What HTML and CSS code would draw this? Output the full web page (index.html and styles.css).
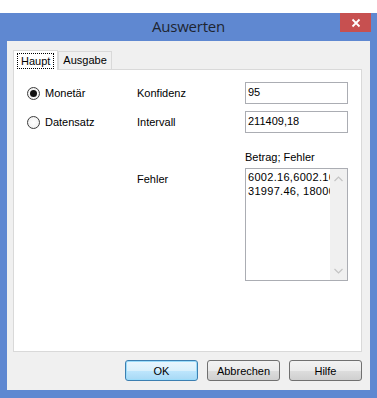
FILE: index.html
```html
<!DOCTYPE html>
<html lang="de">
<head>
    <meta charset="UTF-8">
    <meta name="viewport" content="width=device-width, initial-scale=1.0">
    <title>Auswerten</title>
    <link rel="stylesheet" href="styles.css">
</head>
<body>
    <div class="window">
        <div class="titlebar">
            <span></span>
            <span class="title">Auswerten</span>
            <a href="#" class="close">
                <svg width="10" height="10" viewBox="0 0 10 10">
                    <path d="M1.5 1.5 L8.5 8.5 M8.5 1.5 L1.5 8.5" stroke="#fff" stroke-width="1.8" fill="none"/>
                </svg>
            </a>
        </div>
        <div class="client">
            <ul class="tabs">
                <li class="tab active"><span class="focus">Haupt</span></li>
                <li class="tab">Ausgabe</li>
            </ul>
            <div class="panel">
                <div class="radios">
                    <label class="radio checked"><i></i>Monetär</label>
                    <label class="radio"><i></i>Datensatz</label>
                </div>
                <div class="form">
                    <div class="row">
                        <span class="label">Konfidenz</span>
                        <div class="field">95</div>
                    </div>
                    <div class="row">
                        <span class="label">Intervall</span>
                        <div class="field">211409,18</div>
                    </div>
                    <div class="row hint-row">
                        <span class="label"></span>
                        <span class="hint">Betrag; Fehler</span>
                    </div>
                    <div class="row area-row">
                        <span class="label">Fehler</span>
                        <div class="area">
                            <div class="area-text">6002.16,6002.16<br>31997.46, 18000</div>
                            <div class="scroll">
                                <svg width="9" height="6" viewBox="0 0 9 6"><path d="M0.5 5 L4.5 1 L8.5 5" stroke="#c4c4c4" stroke-width="1.2" fill="none"/></svg>
                                <svg width="9" height="6" viewBox="0 0 9 6"><path d="M0.5 1 L4.5 5 L8.5 1" stroke="#c4c4c4" stroke-width="1.2" fill="none"/></svg>
                            </div>
                        </div>
                    </div>
                </div>
            </div>
            <div class="buttons">
                <button class="btn default">OK</button>
                <button class="btn">Abbrechen</button>
                <button class="btn">Hilfe</button>
            </div>
        </div>
    </div>
</body>
</html>
```

FILE: styles.css
```css
*{
    margin: 0;
    padding: 0;
    box-sizing: border-box;
}
body{
    background-color: #fff;
    font-family: "Liberation Sans", Arial, sans-serif;
    font-size: 11px;
    color: #000;
}
li{
    list-style: none;
}
.window{
    margin-top: 13px;
    width: 377px;
    height: 385px;
    padding: 0 7px 8px 7px;
    background-color: #5f88d1;
    display: flex;
    flex-direction: column;
}
.titlebar{
    height: 28px;
    display: grid;
    grid-template-columns: 1fr auto 1fr;
}
.title{
    font-family: "Open Sans", "Noto Sans", sans-serif;
    font-size: 15px;
    color: #1e2530;
    line-height: 26px;
    letter-spacing: -0.2px;
}
.close{
    justify-self: end;
    margin-right: -1px;
    width: 31px;
    height: 19px;
    background-color: #c75050;
    display: flex;
    align-items: center;
    justify-content: center;
}
.client{
    flex: 1;
    background-color: #f0f0f0;
    padding: 9px 8px 0 6px;
    display: flex;
    flex-direction: column;
}
.tabs{
    display: flex;
    align-items: flex-end;
    height: 19px;
    position: relative;
    z-index: 1;
}
.tab{
    height: 18px;
    padding: 0 4px;
    border: 1px solid #d9d9d9;
    border-bottom: none;
    background-color: #f0f0f0;
    line-height: 17px;
}
.tab.active{
    height: 20px;
    margin-bottom: -1px;
    padding: 2px 3px 0 3px;
    background-color: #fff;
    border-color: #d9d9d9;
    line-height: 15px;
}
.focus{
    display: block;
    padding: 0 3px;
    border: 1px dotted #000;
    line-height: 14px;
}
.panel{
    height: 283px;
    border: 1px solid #d9d9d9;
    background-color: #fff;
    padding: 12px 0 0 13px;
    display: flex;
}
.radios{
    width: 110px;
    display: flex;
    flex-direction: column;
    gap: 15px;
    padding-top: 4px;
}
.radio{
    display: flex;
    align-items: center;
    gap: 5px;
    height: 14px;
}
.radio i{
    width: 13px;
    height: 13px;
    border: 1px solid #3c3c3c;
    border-radius: 50%;
    background: radial-gradient(circle, #fff 0, #f4f4f4 60%, #dcdcdc 100%);
    display: flex;
    align-items: center;
    justify-content: center;
}
.radio.checked i::after{
    content: "";
    width: 7px;
    height: 7px;
    border-radius: 50%;
    background-color: #111;
}
.form{
    display: flex;
    flex-direction: column;
    gap: 7px;
}
.row{
    display: flex;
}
.label{
    width: 108px;
    line-height: 22px;
}
.field{
    width: 103px;
    height: 22px;
    border: 1px solid #abadb3;
    padding-left: 2px;
    line-height: 18px;
}
.hint-row{
    margin-top: 10px;
}
.hint{
    line-height: 14px;
}
.area-row{
    margin-top: -3px;
}
.area{
    width: 103px;
    height: 113px;
    border: 1px solid #abadb3;
    display: flex;
    overflow: hidden;
}
.area-text{
    flex: 1;
    padding: 1px 0 0 2px;
    line-height: 14px;
    letter-spacing: 0.3px;
    white-space: nowrap;
    overflow: hidden;
}
.scroll{
    width: 17px;
    background-color: #f0f0f0;
    display: flex;
    flex-direction: column;
    justify-content: space-between;
    align-items: center;
    padding: 7px 0 6px;
}
.buttons{
    display: flex;
    justify-content: flex-end;
    gap: 9px;
    margin-top: 8px;
}
.btn{
    width: 73px;
    height: 21px;
    border: 1px solid #707070;
    border-radius: 3px;
    background: linear-gradient(#f2f2f2 0, #ebebeb 50%, #dddddd 51%, #cfcfcf 100%);
    font-family: "Liberation Sans", Arial, sans-serif;
    font-size: 11px;
    color: #000;
}
.btn.default{
    border-color: #3c7fb1;
    background: linear-gradient(#eaf6fd 0, #d9f0fc 50%, #bee6fd 51%, #a7d9f5 100%);
    box-shadow: inset 0 0 0 1px #9cdcfa;
}
```
